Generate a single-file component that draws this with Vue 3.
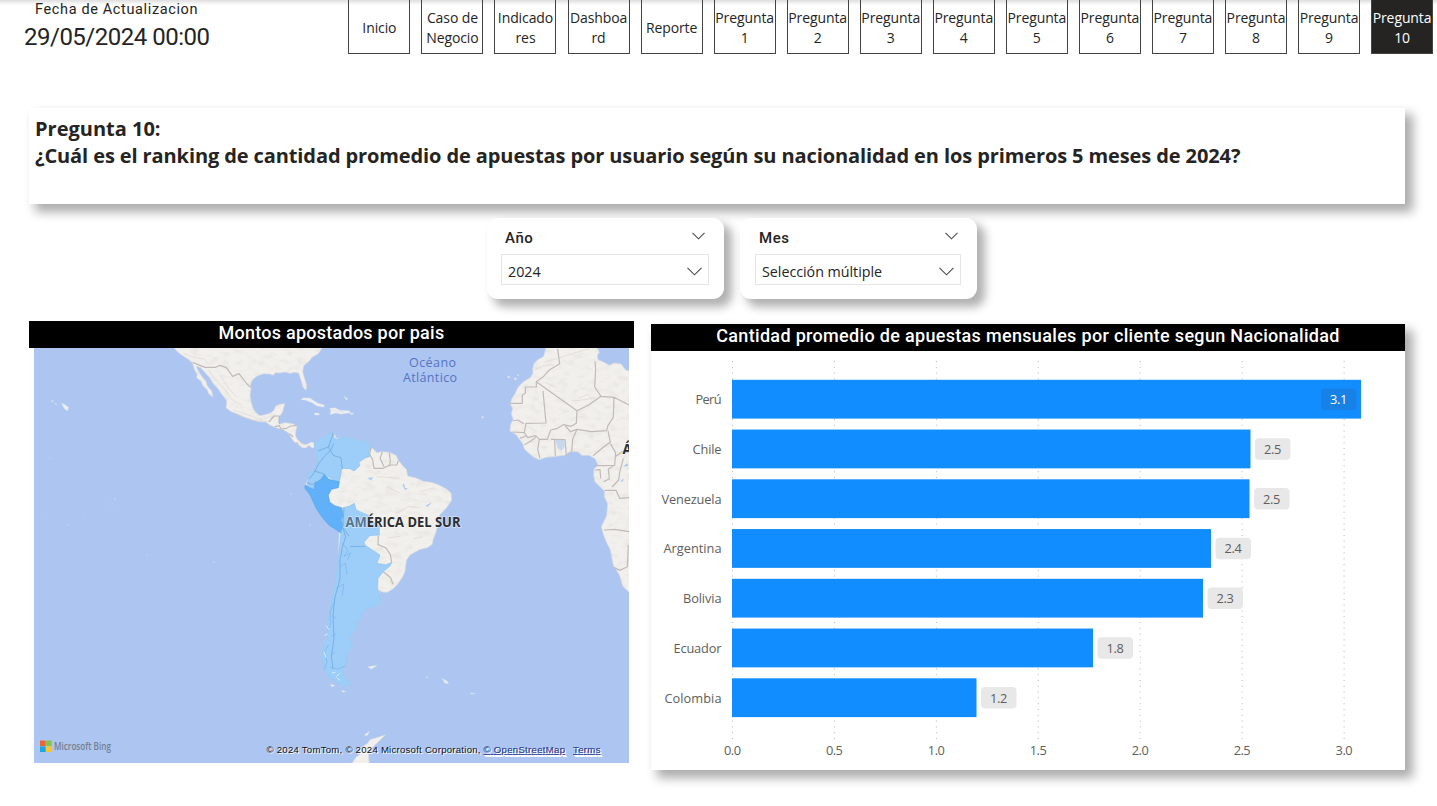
<script setup>
const pages = [
  ['Inicio'], ['Caso de', 'Negocio'], ['Indicado', 'res'], ['Dashboa', 'rd'], ['Reporte'],
  ...Array.from({ length: 10 }, (_, i) => ['Pregunta', String(i + 1)]),
]
const slicers = [
  { name: 'Año', value: '2024', cls: 'year' },
  { name: 'Mes', value: 'Selección múltiple', cls: 'month' },
]
const bars = [
  { label: 'Perú', end: 1361, value: '3.1', w: 26 },
  { label: 'Chile', end: 1250.5, value: '2.5', w: 29 },
  { label: 'Venezuela', end: 1249.5, value: '2.5', w: 60 },
  { label: 'Argentina', end: 1211, value: '2.4', w: 58 },
  { label: 'Bolivia', end: 1203, value: '2.3', w: 38.5 },
  { label: 'Ecuador', end: 1093, value: '1.8', w: 48 },
  { label: 'Colombia', end: 976.5, value: '1.2', w: 57 },
].map((b, i) => ({
  ...b,
  y: 379.8 + i * 49.75,
  inside: i === 0,
  badge: i === 0 ? b.end - 40 : b.end + 4.5,
}))
const ticks = ['0.0', '0.5', '1.0', '1.5', '2.0', '2.5', '3.0'].map((t, i) => ({ t, x: 732.5 + i * 101.93 }))
</script>

<template>
  <main class="report">
    <header class="top">
      <div class="updated">
        <div class="caption">Fecha de Actualizacion</div>
        <div class="date">29/05/2024 00:00</div>
      </div>
      <nav class="nav">
        <a v-for="(p, i) in pages" :key="i" class="page" :class="{ active: i === 14 }">
          <span v-for="line in p" :key="line">{{ line }}</span>
        </a>
      </nav>
    </header>

    <section class="question">
      <div class="q1">Pregunta 10:</div>
      <div class="q2">¿Cuál es el ranking de cantidad promedio de apuestas por usuario según su nacionalidad en los primeros 5 meses de 2024?</div>
    </section>

    <section class="slicers">
      <div v-for="s in slicers" :key="s.name" class="slicer" :class="s.cls">
        <div class="slicer-head">
          <span>{{ s.name }}</span>
          <svg width="13" height="8" viewBox="0 0 13 8"><path d="M.5 .8 6.5 6.8 12.5 .8" /></svg>
        </div>
        <div class="select">
          <span>{{ s.value }}</span>
          <svg width="15" height="9" viewBox="0 0 15 9"><path d="M.5 .8 7.5 7.8 14.5 .8" /></svg>
        </div>
      </div>
    </section>

    <section class="visuals">
      <article class="map-card">
        <h2><span class="t-map">Montos apostados por pais</span></h2>
        <svg class="map" width="595" height="415" viewBox="34 348 595 415">
          <defs>
            <filter id="relief" x="0" y="0" width="100%" height="100%">
              <feTurbulence type="fractalNoise" baseFrequency="0.035 0.06" numOctaves="3" seed="4" result="n" />
              <feColorMatrix in="n" type="matrix" values="0 0 0 0 .7  0 0 0 0 .68  0 0 0 0 .64  0 1.1 0 0 -.52" result="s" />
              <feComposite in="s" in2="SourceGraphic" operator="in" result="c" />
              <feMerge><feMergeNode in="SourceGraphic" /><feMergeNode in="c" /></feMerge>
            </filter>
          </defs>
          <rect x="34" y="348" width="595" height="415" fill="#acc6f1" />

          <g transform="translate(20 315) scale(.33333)">
            <path class="land" filter="url(#relief)" d="M455 90 470 108 485 120 508 135 518 145 524 165 532 178 530 188 543 198 549 212 562 224 566 236 579 246 575 228 562 213 557 197 546 185 532 163 529 153 542 158 553 170 569 188 581 207 594 221 605 237 619 255 620 266 618 278 634 290 655 298 674 307 695 314 717 320 737 321 751 331 771 339 790 344 806 354 814 368 820 378 833 387 847 398 858 399 866 391 877 399 888 394 886 385 873 382 858 389 845 386 831 372 826 360 828 345 831 334 818 326 795 323 778 328 775 318 780 302 788 290 794 266 779 268 767 273 762 286 752 294 736 299 719 302 708 293 699 280 693 260 690 242 693 220 691 210 697 195 711 183 731 176 749 177 760 181 766 173 779 174 795 171 810 175 824 172 836 174 844 198 849 216 858 226 860 211 853 188 848 170 851 152 868 138 876 127 895 116 910 92Z" />
            <path class="border" d="M518 142 555 157 588 157 599 151 619 158 638 184 657 176 668 190 681 207 692 217M747 321 762 303 778 303 778 326M764 335 778 332 783 342 800 340 812 333 830 332M808 356 820 365M830 382 835 388" />
            <path class="ridge" d="M490 115 522 127 552 132 565 145M565 165 590 198 617 226 635 253 665 270M640 285 680 298 726 314M600 180 626 220 650 246M638 291 660 303 700 315 745 320" />
            <path class="island" d="M842 254 851 248 870 249 883 258 895 265 914 270 911 277 890 273 876 263 857 256ZM928 280 945 278 960 286 988 287 992 293 963 298 944 292 927 297 935 288ZM882 294 896 294 899 300 886 301ZM124 264 133 268 146 277 143 288 134 283ZM93 256 101 258 98 262ZM104 265 111 268 108 270Z" />
          </g>

          <g transform="translate(330 315) scale(.33333)">
            <path class="land" filter="url(#relief)" d="M650 90 643 118 640 125 623 134 612 146 608 162 609 174 601 188 587 196 574 206 563 219 556 235 545 252 541 267 548 280 544 298 550 313 542 328 540 348 557 358 568 372 579 387 583 402 597 415 612 427 628 434 648 427 680 424 704 421 719 410 743 410 756 421 777 421 795 431 804 449 792 463 791 482 795 500 812 517 824 529 823 545 833 566 830 602 814 635 821 661 830 683 841 704 850 751 869 781 878 813 897 832 910 832 910 165 889 167 873 147 853 144 838 151 818 140 804 134 802 121 808 112 797 90Z" />
            <path class="border" d="M540 265 577 265 577 240 586 235 586 216 619 216 619 200 640 185 659 164 689 146 683 102M621 202 741 287 739 325 723 334 700 329 682 340 662 345 652 373 628 373 617 362 593 368 583 353 588 325 648 324 639 228M741 287 776 270 813 244 794 216 797 162 795 139M813 244 852 247 897 270M852 247 850 307 834 331 830 347 784 350 741 343 728 372 725 411M741 343 721 350 706 333M582 326 563 315 549 318M583 353 547 351M570 370 587 363M583 389 602 379 617 367M628 373 623 404 630 430M676 424 674 374M709 421 705 374 663 373M834 348 841 381 817 399 789 422M841 386 857 413 854 451 795 452M858 424 880 408 895 414M854 451 835 462 838 492 821 500M795 465 810 464 812 490M824 526 858 526 869 550 897 548M880 430 869 472 866 495 846 516M822 645 855 643 897 650M895 690 892 755 870 766 852 758" />
            <path class="ridge" d="M641 140 679 132 739 112 777 102M611 165 640 153 672 149M745 250 773 238 783 250M645 202 680 218M725 258 765 254 795 249" />
            <path class="island" d="M533 182 542 187 533 189ZM553 187 562 192 554 195ZM561 180 565 176 566 184ZM455 303 461 306 457 311ZM2 284 25 289 40 291 35 297 18 294 2 299ZM56 294 72 294 66 299ZM41 243 54 252 49 255Z" />
            <path class="water" opacity=".6" d="M676 374 701 374 704 395 694 408 683 400Z" />
            <path class="water" d="M891 445 879 456 895 452ZM881 490 872 498 878 501Z" />
          </g>

          <g transform="translate(290 420) scale(.33333)">
            <path class="land" filter="url(#relief)" d="M72 72 88 58 97 53 112 45 129 37 140 56 155 49 174 54 191 53 207 65 227 61 241 75 246 83 261 98 275 95 298 97 318 106 325 121 337 136 349 148 353 168 378 174 400 184 424 187 445 194 469 207 483 219 485 240 477 253 466 268 451 282 442 299 442 321 437 338 429 359 427 373 412 383 391 388 374 397 360 405 349 421 345 454 338 470 324 491 311 505 292 517 277 516 265 509 270 529 274 546 263 559 227 568 215 582 213 596 201 605 200 629 184 641 180 658 190 678 172 697 168 738 158 747 165 775 185 793 159 801 137 785 118 773 105 751 96 717 99 677 112 652 112 609 121 559 134 496 145 414 148 335 117 316 96 292 78 265 60 225 44 205 48 190 56 177 54 161 77 147 81 124 78 95Z" />
            <path class="shaded" d="M72 72 88 58 97 53 112 45 129 37 132 52 140 59 155 49 174 54 191 53 207 65 227 61 241 75 246 83 237 95 239 110 225 114 207 127 210 137 192 153 180 146 155 145 153 163 148 186 130 180 103 163 93 178 75 190 70 208 51 195 56 177 54 161 77 147 81 124 78 95Z" />
            <path class="shaded strong" d="M46 195 60 203 72 209 75 190 93 178 103 163 117 178 148 186 145 203 125 208 115 225 119 246 134 257 155 263 160 287 154 300 160 314 153 339 117 316 96 292 78 265 60 225 44 205Z" />
            <path class="shaded" d="M158 263 176 259 193 250 198 269 217 278 238 287 248 306 268 318 268 345 239 347 222 367 226 376 270 405 261 430 287 434 306 427 300 438 279 456 264 475 263 508 270 529 274 546 263 559 227 568 215 582 213 596 201 605 200 629 184 641 180 658 190 678 172 697 168 738 158 747 165 775 185 793 159 801 137 785 118 773 105 751 96 717 99 677 112 652 112 609 121 559 134 496 145 414 153 336 160 314 154 300 160 287Z" />
            <path class="border" d="M243 81 239 103 248 120 252 145 280 145 299 135 320 135 325 122M277 96 270 115 282 140M298 98 301 125 298 139M265 347 264 374 288 384 301 404 305 426M280 455 302 473 309 493" />
            <path class="blueborder" d="M130 39 115 82 131 107 153 113 157 148M131 71 122 91 106 106 85 132 73 157 59 176M119 79 85 93M73 153 91 158 103 163M50 188 68 194 79 184M162 265 158 323 167 350 157 382 150 423 150 477 135 532 129 585 132 655 124 709 129 745M180 380 225 379M160 324 177 348" />
            <path class="bluehatch" d="M157 370 174 391 161 410 182 398 172 421M149 442 166 429 171 465M139 504 161 492 157 528M126 586 139 596M125 650 139 640M123 705 134 697M120 743 145 747 165 738M102 751 111 725 104 693 116 674M113 631 122 612 120 575 132 548" />
            <path class="ridge" d="M260 170 330 175M290 200 330 220M390 215 430 204M320 280 357 259 391 264M350 313 401 302M295 354 330 349M372 356 399 350" />
            <path class="water" d="M231 174 250 172 243 181ZM337 194 342 191 345 204 354 205 345 210ZM406 257 426 247 413 260Z" />
            <path class="peaks" d="M104 646 113 642M108 616 117 629M102 695 108 713M126 759 136 757M139 770 149 760M150 781 140 773" />
          </g>

          <g transform="translate(330 540) scale(.33333)">
            <path class="land" d="M60 680 78 652 91 642 91 624 113 610 120 599 166 585 145 605 130 620 115 633 118 680Z" />
            <path class="island" d="M336 415 352 424 356 431 344 429ZM113 380 142 376 124 388ZM288 410 296 412 289 414ZM420 459 438 460 424 462ZM35 451 49 455 37 457ZM0 433 15 436 6 441ZM102 586 119 572 112 587Z" />
          </g>
          <g class="specks">
            <circle cx="50" cy="458" r=".8" /><circle cx="115" cy="499" r="1" /><circle cx="112" cy="504" r=".8" />
            <circle cx="68" cy="525" r=".8" /><circle cx="41" cy="513" r=".6" /><circle cx="147" cy="555" r=".8" />
            <circle cx="214" cy="562" r=".9" /><circle cx="310" cy="525" r="1" /><circle cx="291" cy="494" r=".9" /><circle cx="84" cy="517" r=".7" />
          </g>

          <g class="sea">
            <text x="409" y="367" textLength="47">Océano</text>
            <text x="403" y="382" textLength="54">Atlántico</text>
          </g>
          <g class="place">
            <text x="345.5" y="526.5" textLength="115" lengthAdjust="spacingAndGlyphs"><tspan fill="#56758f">AM</tspan>ÉRICA DEL SUR</text>
            <text x="622.5" y="454">Á</text>
          </g>

          <g>
            <rect x="40" y="740.5" width="5.6" height="5.6" fill="#e9663c" /><rect x="46" y="740.5" width="5.6" height="5.6" fill="#8ac249" />
            <rect x="40" y="746.4" width="5.6" height="5.6" fill="#1da5e9" /><rect x="46" y="746.4" width="5.6" height="5.6" fill="#fbc52f" />
            <text class="bing" x="54" y="750" textLength="57" lengthAdjust="spacingAndGlyphs">Microsoft Bing</text>
          </g>
          <g class="credit">
            <text x="266.5" y="753" textLength="214">© 2024 TomTom, © 2024 Microsoft Corporation,</text>
            <text class="link" x="483.5" y="753" textLength="81.5">© OpenStreetMap</text>
            <text class="link" x="573" y="753" textLength="27.5">Terms</text>
          </g>
        </svg>
      </article>

      <article class="chart-card">
        <h2><span class="t-chart">Cantidad promedio de apuestas mensuales por cliente segun Nacionalidad</span></h2>
        <svg class="chart" width="754" height="419" viewBox="651 351 754 419">
          <line v-for="k in ticks" :key="k.t" class="grid" :x1="k.x" :x2="k.x" y1="361" y2="739" />
          <g v-for="b in bars" :key="b.label">
            <rect :x="732" :y="b.y" :width="b.end - 732" height="38.8" fill="#118dff" />
            <rect :x="b.badge" :y="b.y + 8.8" width="35.5" height="21.4" rx="4" :fill="b.inside ? '#1781e6' : '#e8e8e8'" />
            <text :class="b.inside ? 'v-in' : 'v-out'" :x="b.badge + 9" :y="b.y + 24.3" textLength="17.3">{{ b.value }}</text>
            <text class="axis" :x="721.5 - b.w" :y="b.y + 24.3" :textLength="b.w">{{ b.label }}</text>
          </g>
          <text v-for="k in ticks" :key="'t' + k.t" class="axis" :x="k.x - 8.5" y="755" textLength="17">{{ k.t }}</text>
        </svg>
      </article>
    </section>
  </main>
</template>

<style>
body { margin: 0; background: #fff; overflow: hidden; }
</style>

<style scoped>
.report {
  width: 1437px; height: 806px; box-sizing: border-box; overflow: hidden;
  background: linear-gradient(#dedede, #fff 5px); color: #252423;
  font-family: "Open Sans", "Noto Sans", sans-serif;
}
.top { display: flex; height: 54px; }
.updated { width: 348.4px; flex: none; font-family: Roboto, sans-serif; white-space: nowrap; }
.caption { margin-left: 35px; font-size: 14.5px; line-height: 18px; padding-top: 1px; letter-spacing: .63px; }
.date { margin-left: 24px; font-size: 24px; line-height: 28px; margin-top: 4px; letter-spacing: -.5px; }
.nav { display: flex; gap: 11.05px; }
.page {
  width: 62px; height: 54px; box-sizing: border-box; border: 1px solid #454443; border-top: 0;
  display: flex; flex-direction: column; justify-content: center; align-items: center;
  padding-top: 3px; font-size: 14px; line-height: 20px; letter-spacing: -.1px; white-space: nowrap;
}
.page.active { background: #252423; color: #fff; }
.question {
  margin: 54px 0 0 29px; width: 1376px; height: 96px; box-sizing: border-box; padding: 7px 6px;
  background: #fff; box-shadow: 7px 7px 10px 1px rgba(0, 0, 0, .33);
  font-weight: 700; font-size: 20px; line-height: 27px; white-space: nowrap;
}
.q2 { letter-spacing: -.105px; }
.slicers { display: flex; gap: 16px; margin: 14px 0 0 487px; height: 81px; position: relative; }
.slicer {
  width: 237px; box-sizing: border-box; border-radius: 11px; background: #fff;
  box-shadow: 7px 7px 10px 1px rgba(0, 0, 0, .31); padding: 9px 15px 0 14px;
}
.month { padding-left: 15px; padding-right: 16px; }
.slicer svg { fill: none; stroke: #4a4a4a; stroke-width: 1.1; flex: none; }
.slicer-head {
  display: flex; justify-content: space-between; height: 21px; padding: 0 4px 0 4px;
  font: 500 15px/22px Roboto, sans-serif; letter-spacing: .6px;
}
.slicer-head svg { margin-top: 5px; }
.month .slicer-head { padding-right: 3px; }
.select {
  display: flex; justify-content: space-between; align-items: center; margin-top: 6px; height: 31px;
  box-sizing: border-box; border: 1px solid #e6e6e6; padding: 3px 6px 0; font-size: 14.3px; letter-spacing: -.03px;
}
.visuals { display: flex; align-items: flex-start; margin: 22px 0 0 29px; }
.map-card { width: 605px; flex: none; }
h2 {
  margin: 0; height: 27px; background: #000; color: #fff; text-align: center; white-space: nowrap;
  font: 500 18px/24px Roboto, sans-serif;
}
.map { display: block; margin-left: 5px; }
.chart-card { width: 754px; flex: none; height: 446px; margin: 3px 0 0 17px; background: #fff; box-shadow: 7px 7px 10px 1px rgba(0, 0, 0, .33); }
.t-map { letter-spacing: .25px; }
.t-chart { letter-spacing: .32px; }
.chart { display: block; }
.land { fill: #f2f0ec; stroke: #d9dbe0; stroke-width: 2; }
.island { fill: #eceef1; stroke: #ccd7e8; stroke-width: 1; }
.border { fill: none; stroke: #c0bbb7; stroke-width: 3.6; stroke-linejoin: round; }
.ridge { fill: none; stroke: #d8d4ce; stroke-width: 3; opacity: .6; }
.shaded { fill: #98ccf9; fill-opacity: .96; stroke: #82bdec; stroke-width: 1.5; }
.strong { fill: #59aef9; stroke: #4398e5; }
.blueborder { fill: none; stroke: #70abe0; stroke-width: 2.5; }
.bluehatch { fill: none; stroke: #70aee5; stroke-width: 2.2; opacity: .75; }
.peaks { fill: none; stroke: #d8ecfc; stroke-width: 3; }
.water { fill: #acc8f3; }
.specks { fill: #bdd3f5; }
.sea { font-size: 12.5px; fill: #5673c4; }
.place { font-size: 13.5px; font-weight: 700; fill: #2c2d30; paint-order: stroke; stroke: rgba(255, 255, 255, .5); stroke-width: 1.5px; }
.bing { font-size: 10px; font-weight: 600; fill: #737f93; }
.credit { font-family: "Liberation Sans", Arial, sans-serif; font-size: 9.6px; fill: #111; text-shadow: 1px 1px 0 #fff; }
.link { fill: #3a4b9c; text-decoration: underline; }
.grid { stroke: #b4b4b4; stroke-width: 1; stroke-dasharray: 1 4.8; }
.axis { font-size: 12.8px; fill: #605e5c; }
.v-in, .v-out { font-size: 12.8px; }
.v-in { fill: #fff; }
.v-out { fill: #605e5c; }
</style>
